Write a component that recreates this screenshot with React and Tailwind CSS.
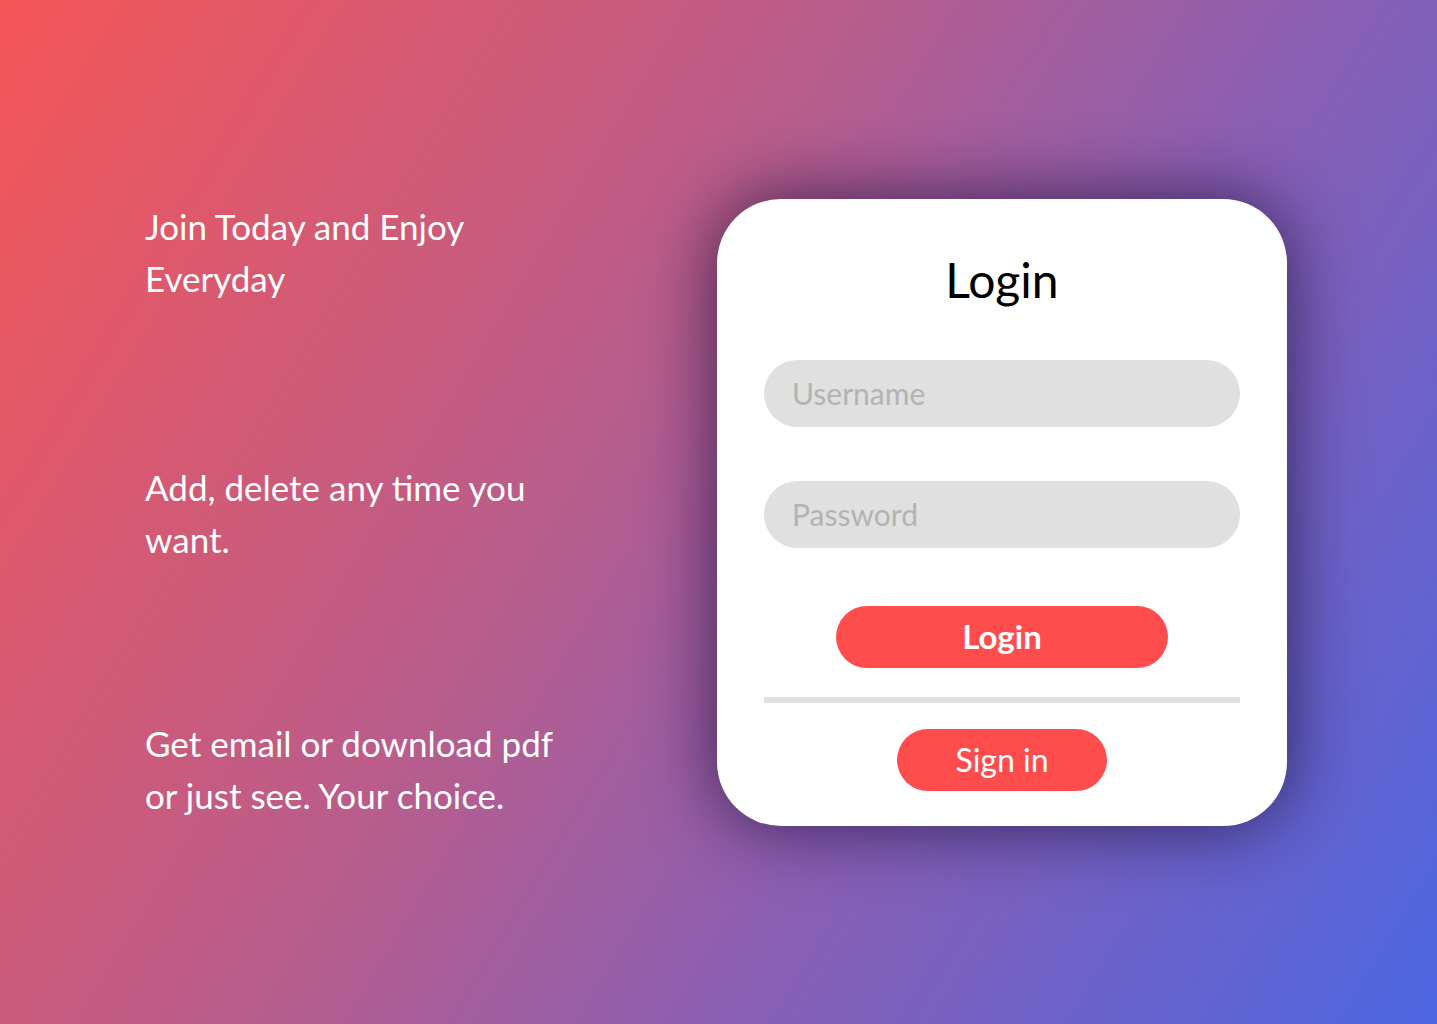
export default function App() {
  const font = { fontFamily: "Lato, 'Open Sans', sans-serif" };

  return (
    <div
      className="w-full h-[1024px] flex items-center bg-[linear-gradient(121deg,#f55657_0%,#b85d8c_42%,#8a5fb3_65%,#4c66e1_100%)] overflow-hidden"
      style={font}
    >
      {/* Left copy */}
      <div className="w-[717px] pl-[145px] pb-[4px] flex flex-col text-white text-[35px] leading-[52px]">
        <p className="w-[460px]">Join Today and Enjoy<br />Everyday</p>
        <p className="w-[460px] mt-[157px]">Add, delete any time you<br />want.</p>
        <p className="w-[460px] mt-[152px]">Get email or download pdf<br />or just see. Your choice.</p>
      </div>

      {/* Card */}
      <div className="w-[570px] bg-white rounded-[64px] shadow-[0_0_70px_rgba(25,15,55,0.75)] pt-[54px] pb-[35px] flex flex-col items-center">
        <h1 className="text-[48px] leading-[53px] text-black">Login</h1>

        <input
          placeholder="Username"
          className="mt-[54px] w-[476px] h-[67px] rounded-full bg-[#e0e0e0] px-[28px] text-[30px] text-gray-700 placeholder:text-[#b3b3b3] outline-none"
        />
        <input
          type="password"
          placeholder="Password"
          className="mt-[54px] w-[476px] h-[67px] rounded-full bg-[#e0e0e0] px-[28px] text-[30px] text-gray-700 placeholder:text-[#b3b3b3] outline-none"
        />

        <button className="mt-[58px] w-[332px] h-[62px] rounded-full bg-[#ff4d4d] text-white text-[33px] font-bold">
          Login
        </button>

        <div className="mt-[29px] w-[476px] h-[6px] bg-[#e0e0e0]" />

        <button className="mt-[26px] w-[210px] h-[62px] rounded-full bg-[#ff4d4d] text-white text-[32px]">
          Sign in
        </button>
      </div>
    </div>
  );
}
